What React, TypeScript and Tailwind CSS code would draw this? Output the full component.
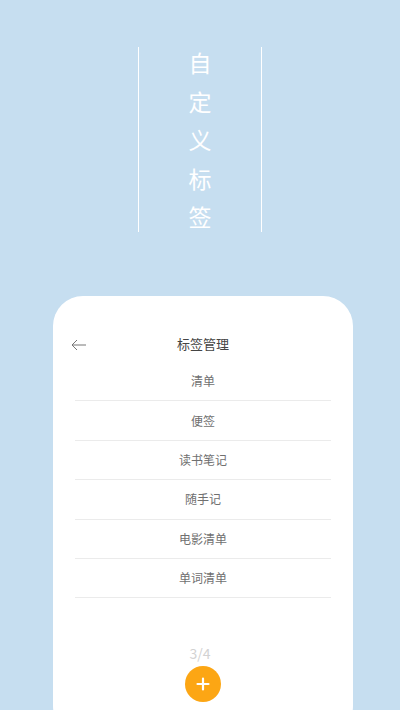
import React from 'react'

const tags = ["清单", "便签", "读书笔记", "随手记", "电影清单", "单词清单"]

export default function App() {
  return (
    <div
      className="w-[400px] h-[710px] overflow-hidden bg-[#c6def0]"
      style={{ fontFamily: '"Noto Sans CJK SC", "Noto Sans", sans-serif' }}
    >
      {/* 竖排标题 */}
      <div className="flex justify-center pt-[47px]">
        <div className="w-[124px] h-[185px] border-l border-r border-white flex items-center justify-center">
          <div className="flex flex-col items-center text-white text-[23px] leading-[38.5px]">
            {"自定义标签".split("").map((c, i) => (
              <span key={i}>{c}</span>
            ))}
          </div>
        </div>
      </div>

      {/* 卡片 */}
      <div className="mt-[64px] ml-[53px] w-[300px] h-[440px] bg-white rounded-[30px] px-[22px]">
        <div className="relative pt-[34px] h-[62px] flex items-center justify-center">
          <svg
            className="absolute left-[-5px] top-[42px]"
            width="18"
            height="14"
            viewBox="0 0 18 14"
            fill="none"
            stroke="#777"
            strokeWidth="1"
          >
            <path d="M16 7 H2 M7 2 L2 7 L7 12" />
          </svg>
          <span className="text-[13px] text-[#444]">标签管理</span>
        </div>

        <div className="mt-[4px]">
          {tags.map((t) => (
            <div
              key={t}
              className="h-[39.4px] flex items-center justify-center border-b border-[#ebebeb] text-[12px] text-[#707070]"
            >
              {t}
            </div>
          ))}
        </div>

        <div className="mt-[46px] flex flex-col items-center">
          <span className="mr-[6px] text-[14px] leading-[18px] text-[#d2d2d2]">3/4</span>
          <div className="mt-[4px] w-[36px] h-[36px] rounded-full bg-[#fca614] flex items-center justify-center">
            <svg width="14" height="14" viewBox="0 0 14 14" stroke="white" strokeWidth="2.2" strokeLinecap="round">
              <path d="M7 1.5 V12.5 M1.5 7 H12.5" />
            </svg>
          </div>
        </div>
      </div>
    </div>
  )
}
